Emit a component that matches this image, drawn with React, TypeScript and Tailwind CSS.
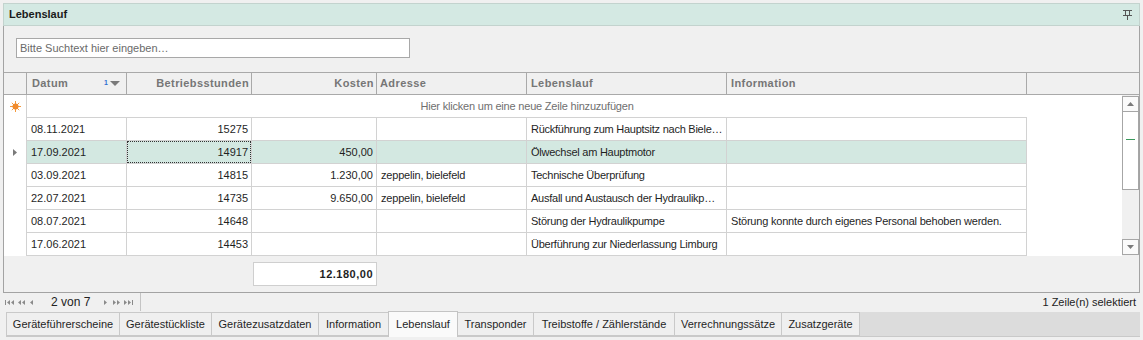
import React from 'react'

interface Row {
  datum: string
  stunden: string
  kosten: string
  adresse: string
  lebenslauf: string
  info: string
}

const rows: Row[] = [
  { datum: '08.11.2021', stunden: '15275', kosten: '', adresse: '', lebenslauf: 'Rückführung zum Hauptsitz nach Biele…', info: '' },
  { datum: '17.09.2021', stunden: '14917', kosten: '450,00', adresse: '', lebenslauf: 'Ölwechsel am Hauptmotor', info: '' },
  { datum: '03.09.2021', stunden: '14815', kosten: '1.230,00', adresse: 'zeppelin, bielefeld', lebenslauf: 'Technische Überprüfung', info: '' },
  { datum: '22.07.2021', stunden: '14735', kosten: '9.650,00', adresse: 'zeppelin, bielefeld', lebenslauf: 'Ausfall und Austausch der Hydraulikp…', info: '' },
  { datum: '08.07.2021', stunden: '14648', kosten: '', adresse: '', lebenslauf: 'Störung der Hydraulikpumpe', info: 'Störung konnte durch eigenes Personal behoben werden.' },
  { datum: '17.06.2021', stunden: '14453', kosten: '', adresse: '', lebenslauf: 'Überführung zur Niederlassung Limburg', info: '' },
]

const tabs = [
  { label: 'Geräteführerscheine', w: 'w-[114px]' },
  { label: 'Gerätestückliste', w: 'w-[93px]' },
  { label: 'Gerätezusatzdaten', w: 'w-[108px]' },
  { label: 'Information', w: 'w-[71px]' },
  { label: 'Lebenslauf', w: 'w-[70px]', active: true },
  { label: 'Transponder', w: 'w-[77px]' },
  { label: 'Treibstoffe / Zählerstände', w: 'w-[142px]' },
  { label: 'Verrechnungssätze', w: 'w-[108px]' },
  { label: 'Zusatzgeräte', w: 'w-[79px]' },
]

const cell = 'h-[23px] shrink-0 border-r border-b border-[#d2d2d2] flex items-center whitespace-nowrap overflow-hidden'
const head = 'h-full shrink-0 border-r border-[#a9a9a9] flex items-center font-bold text-[#767676] tracking-[0.4px] whitespace-nowrap'

function NewRowIcon() {
  return (
    <svg width="11" height="11" viewBox="0 0 11 11">
      <g stroke="#f59a3c" strokeWidth="1">
        <line x1="5.5" y1="0" x2="5.5" y2="11" />
        <line x1="0" y1="5.5" x2="11" y2="5.5" />
        <line x1="1.8" y1="1.8" x2="9.2" y2="9.2" />
        <line x1="9.2" y1="1.8" x2="1.8" y2="9.2" />
      </g>
      <circle cx="5.5" cy="5.5" r="3" fill="#f08a2c" />
    </svg>
  )
}

function PinIcon() {
  return (
    <svg width="9" height="10" viewBox="0 0 9 10" fill="none" stroke="#555" strokeWidth="1">
      <line x1="0" y1="0.5" x2="9" y2="0.5" />
      <line x1="2.5" y1="0.5" x2="2.5" y2="5" />
      <line x1="6.5" y1="0.5" x2="6.5" y2="5" />
      <line x1="0" y1="5.5" x2="9" y2="5.5" />
      <line x1="4.5" y1="5.5" x2="4.5" y2="10" />
    </svg>
  )
}

function Tri({ dir }: { dir: 'up' | 'down' | 'left' | 'right' }) {
  const pts = {
    up: '0,4 3.5,0 7,4',
    down: '0,0 3.5,4 7,0',
    left: '4,0 0,3.5 4,7',
    right: '0,0 4,3.5 0,7',
  }[dir]
  const w = dir === 'up' || dir === 'down' ? 7 : 4
  const h = dir === 'up' || dir === 'down' ? 4 : 7
  return (
    <svg width={w} height={h} viewBox={`0 0 ${w} ${h}`}>
      <polygon points={pts} fill="#7a7a7a" />
    </svg>
  )
}

function NavBtn({ kind }: { kind: 'first' | 'prevPage' | 'prev' | 'next' | 'nextPage' | 'last' }) {
  const c = '#8a8a8a'
  return (
    <svg width="10" height="7" viewBox="0 0 10 7">
      {kind === 'first' && (
        <>
          <rect x="0" y="1" width="1" height="5" fill={c} />
          <polygon points="5,1 2,3.5 5,6" fill={c} />
          <polygon points="9,1 6,3.5 9,6" fill={c} />
        </>
      )}
      {kind === 'prevPage' && (
        <>
          <polygon points="5,1 2,3.5 5,6" fill={c} />
          <polygon points="9,1 6,3.5 9,6" fill={c} />
        </>
      )}
      {kind === 'prev' && <polygon points="6,1 3,3.5 6,6" fill={c} />}
      {kind === 'next' && <polygon points="4,1 7,3.5 4,6" fill={c} />}
      {kind === 'nextPage' && (
        <>
          <polygon points="1,1 4,3.5 1,6" fill={c} />
          <polygon points="5,1 8,3.5 5,6" fill={c} />
        </>
      )}
      {kind === 'last' && (
        <>
          <polygon points="1,1 4,3.5 1,6" fill={c} />
          <polygon points="5,1 8,3.5 5,6" fill={c} />
          <rect x="9" y="1" width="1" height="5" fill={c} />
        </>
      )}
    </svg>
  )
}

export default function App() {
  return (
    <div
      className="w-[1143px] h-[340px] overflow-hidden bg-[#f0f0f0] pt-[3px] text-[11px] text-[#1f1f1f]"
      style={{ fontFamily: '"Liberation Sans", Arial, sans-serif' }}
    >
      {/* Title bar */}
      <div className="ml-[3px] w-[1137px] h-[23px] border border-[#c3d3ce] bg-[#d4e9e3] flex items-center justify-between pl-[5px] pr-[7px]">
        <span className="font-bold text-[#1a1a1a]">Lebenslauf</span>
        <PinIcon />
      </div>

      {/* Panel */}
      <div className="ml-[3px] w-[1137px] border-x border-b border-[#a3a3a3] bg-[#f0f0f0]">
        <div className="h-[46px] pt-[12px] pl-[12px]">
          <div className="w-[394px] h-[20px] border border-[#a8a8a8] bg-white flex items-center pl-[3px] text-[#6a6a6a]">
            Bitte Suchtext hier eingeben…
          </div>
        </div>

        {/* Grid header */}
        <div className="flex h-[23px] border-t border-b border-[#a9a9a9]">
          <div className={`${head} w-[23px]`} />
          <div className={`${head} w-[100px] pl-[5px] pr-[6px] justify-between`}>
            <span>Datum</span>
            <span className="flex items-center gap-[2px]">
              <span className="text-[7px] text-[#2f6fd0] tracking-normal leading-none -mt-[3px]">1</span>
              <span className="w-0 h-0 border-l-[5px] border-r-[5px] border-t-[5px] border-l-transparent border-r-transparent border-t-[#7a7a7a]" />
            </span>
          </div>
          <div className={`${head} w-[125px] justify-end pr-[2px]`}>Betriebsstunden</div>
          <div className={`${head} w-[125px] justify-end pr-[2px]`}>Kosten</div>
          <div className={`${head} w-[150px] pl-[3px]`}>Adresse</div>
          <div className={`${head} w-[200px] pl-[4px]`}>Lebenslauf</div>
          <div className={`${head} w-[300px] pl-[4px]`}>Information</div>
          <div className="flex-1" />
        </div>

        {/* Grid body */}
        <div className="flex bg-white">
          <div className="flex-1">
            <div className="flex">
              <div className="w-[23px] h-[23px] shrink-0 border-r border-[#d2d2d2] flex items-center justify-center">
                <NewRowIcon />
              </div>
              <div className="w-[1000px] h-[23px] border-b border-[#d2d2d2] flex items-center justify-center text-[#6f6f6f] tracking-[-0.2px]">
                Hier klicken um eine neue Zeile hinzuzufügen
              </div>
            </div>
            {rows.map((r, i) => {
              const sel = i === 1
              const bg = sel ? 'bg-[#d3e8e1]' : 'bg-white'
              return (
                <div key={r.datum} className="flex">
                  <div className="w-[23px] h-[23px] shrink-0 border-r border-[#d2d2d2] flex items-center justify-center">
                    {sel && <Tri dir="right" />}
                  </div>
                  <div className={`${cell} ${bg} w-[100px] pl-[4px]`}>{r.datum}</div>
                  <div className={`${cell} ${bg} w-[125px]`}>
                    {sel ? (
                      <div className="w-full h-full border border-dotted border-[#333] flex items-center justify-end pr-[2px]">
                        {r.stunden}
                      </div>
                    ) : (
                      <div className="w-full text-right pr-[3px]">{r.stunden}</div>
                    )}
                  </div>
                  <div className={`${cell} ${bg} w-[125px] justify-end pr-[3px]`}>{r.kosten}</div>
                  <div className={`${cell} ${bg} w-[150px] pl-[4px] tracking-[-0.2px]`}>{r.adresse}</div>
                  <div className={`${cell} ${bg} w-[200px] pl-[4px] tracking-[-0.25px]`}>{r.lebenslauf}</div>
                  <div className={`${cell} ${bg} w-[300px] pl-[4px] tracking-[-0.2px]`}>{r.info}</div>
                </div>
              )
            })}
          </div>

          {/* Scrollbar */}
          <div className="w-[17px] shrink-0 bg-[#f0f0f0] flex flex-col pt-[1px] pb-[1px]">
            <div className="h-[16px] border border-[#a6a6a6] bg-[#fafafa] flex items-center justify-center">
              <Tri dir="up" />
            </div>
            <div className="h-[78px] border-x border-b border-[#a6a6a6] bg-white flex justify-center pt-[27px]">
              <div className="w-[9px] h-[1px] bg-[#3b9a5c]" />
            </div>
            <div className="flex-1" />
            <div className="h-[16px] border border-[#a6a6a6] bg-[#fafafa] flex items-center justify-center">
              <Tri dir="down" />
            </div>
          </div>
        </div>

        {/* Footer summary */}
        <div className="h-[36px] pt-[6px] pl-[249px]">
          <div className="w-[124px] h-[24px] border border-[#cfcfcf] bg-white flex items-center justify-end pr-[3px] font-bold tracking-[0.5px]">
            12.180,00
          </div>
        </div>
      </div>

      {/* Navigator */}
      <div className="ml-[3px] w-[1137px] h-[18px] flex items-center justify-between pr-[4px]">
        <div className="w-[138px] h-full border-r border-[#c4c4c4] flex items-center pl-[2px] text-[#222]">
          <NavBtn kind="first" />
          <span className="w-[1px]" />
          <NavBtn kind="prevPage" />
          <span className="w-[1px]" />
          <NavBtn kind="prev" />
          <span className="ml-[14px] mr-[10px] text-[12px]">2 von 7</span>
          <NavBtn kind="next" />
          <span className="w-[2px]" />
          <NavBtn kind="nextPage" />
          <span className="w-[1px]" />
          <NavBtn kind="last" />
        </div>
        <span className="text-[#222]">1 Zeile(n) selektiert</span>
      </div>

      {/* Tabs */}
      <div className="ml-[3px] w-[1137px] h-[26px] flex items-start pl-[3px] pt-[1px]">
        <div className="flex items-start h-full flex-1 border-b border-[#c9c9c9]">
          {tabs.map((t) =>
            t.active ? (
              <div
                key={t.label}
                className={`${t.w} -ml-px -mt-[1px] h-[26px] border border-b-0 border-[#c4c4c4] bg-[#fafafa] flex items-center justify-center text-[#1f1f1f] relative z-10`}
              >
                {t.label}
              </div>
            ) : (
              <div
                key={t.label}
                className={`${t.w} -ml-px first:ml-0 h-[24px] border border-[#c9c9c9] bg-[#efefef] flex items-center justify-center text-[#1f1f1f]`}
              >
                {t.label}
              </div>
            )
          )}
          <div className="flex-1 h-[24px] bg-[#dcdcdc]" />
        </div>
      </div>
    </div>
  )
}
